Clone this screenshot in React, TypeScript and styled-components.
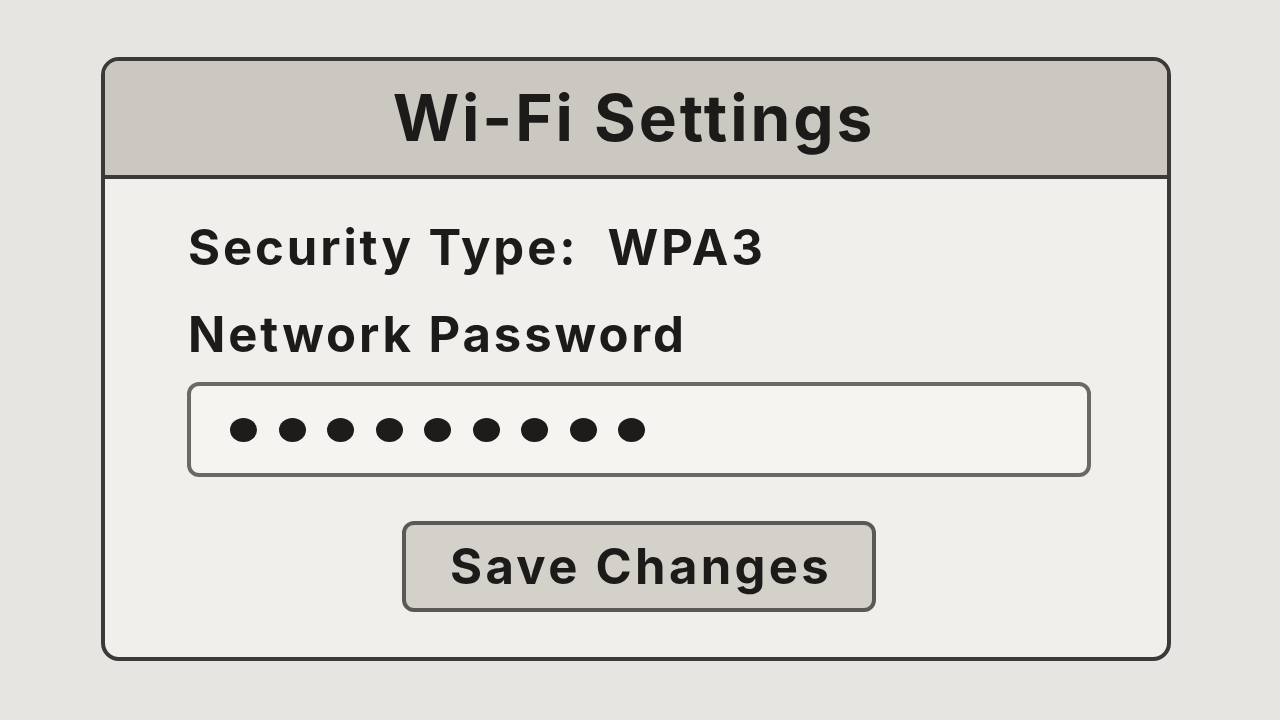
import React from "react";
import styled, { createGlobalStyle } from "styled-components";

const GlobalStyle = createGlobalStyle`
  html, body {
    margin: 0;
    padding: 0;
    background: #e7e5e1;
    font-family: Inter, "Liberation Sans", Arial, sans-serif;
    color: #1c1b1a;
  }
`;

const Page = styled.div`
  width: 1280px;
  height: 720px;
  box-sizing: border-box;
  padding: 57px 0 0 101px;
`;

const Panel = styled.div`
  width: 1070px;
  height: 604px;
  box-sizing: border-box;
  border: 4px solid #3b3a38;
  border-radius: 18px;
  background: #f1efeb;
  overflow: hidden;
  display: flex;
  flex-direction: column;
`;

const Header = styled.div`
  height: 114px;
  background: #cbc7c1;
  border-bottom: 4px solid #3b3a38;
  display: flex;
  align-items: center;
  justify-content: center;
`;

const Title = styled.h1`
  margin: 0;
  font-size: 64px;
  font-weight: 700;
  letter-spacing: 2.9px;
  line-height: 1;
  padding-right: 4px;
`;

const Body = styled.div`
  display: flex;
  flex-direction: column;
  padding: 39px 0 0 82px;
`;

const Label = styled.div<{ $gap?: number }>`
  font-size: 49px;
  font-weight: 700;
  letter-spacing: 2.9px;
  line-height: 60px;
  height: 60px;
  margin-top: ${(p) => p.$gap ?? 0}px;
  padding-left: 1px;
  white-space: pre;
`;

const Field = styled.div`
  margin-top: 17px;
  width: 904px;
  height: 95px;
  box-sizing: border-box;
  border: 4px solid #6b6966;
  border-radius: 12px;
  background: #f5f4f1;
  display: flex;
  align-items: center;
  gap: 21.5px;
  padding: 0 0 0 39px;
`;

const Dot = styled.span`
  width: 27px;
  height: 24px;
  border-radius: 50%;
  background: #1d1c1b;
  flex: none;
`;

const ButtonRow = styled.div`
  width: 904px;
  display: flex;
  justify-content: center;
  margin-top: 44px;
`;

const SaveButton = styled.button`
  width: 474px;
  height: 91px;
  box-sizing: border-box;
  border: 4px solid #5b5956;
  border-radius: 12px;
  background: #d4d1cb;
  font-family: Inter, "Liberation Sans", Arial, sans-serif;
  font-size: 49px;
  font-weight: 700;
  letter-spacing: 3.3px;
  color: #1c1b1a;
  padding: 0 0 0 4px;
`;

export default function App() {
  const dots = Array.from({ length: 9 });
  return (
    <Page>
      <GlobalStyle />
      <Panel>
        <Header>
          <Title>Wi-Fi Settings</Title>
        </Header>
        <Body>
          <Label>{"Security Type:  WPA3"}</Label>
          <Label $gap={27}>Network Password</Label>
          <Field>
            {dots.map((_, i) => (
              <Dot key={i} />
            ))}
          </Field>
          <ButtonRow>
            <SaveButton>Save Changes</SaveButton>
          </ButtonRow>
        </Body>
      </Panel>
    </Page>
  );
}
